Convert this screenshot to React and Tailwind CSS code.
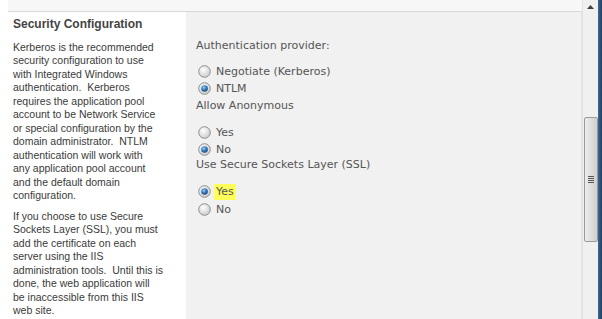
import React from 'react';

function Radio({ checked }) {
  return (
    <svg width="13" height="13" viewBox="0 0 13 13" className="shrink-0">
      <defs>
        <radialGradient id={checked ? 'rc' : 'ru'} cx="0.4" cy="0.35" r="0.7">
          <stop offset="0" stopColor="#ffffff" />
          <stop offset="1" stopColor="#c9c9c9" />
        </radialGradient>
        <radialGradient id="dot" cx="0.4" cy="0.35" r="0.7">
          <stop offset="0" stopColor="#8fd0f5" />
          <stop offset="0.6" stopColor="#2a6fb0" />
          <stop offset="1" stopColor="#15416e" />
        </radialGradient>
      </defs>
      <circle cx="6.5" cy="6.5" r="5.8" fill={`url(#${checked ? 'rc' : 'ru'})`} stroke="#8e8f8f" strokeWidth="1" />
      {checked && <circle cx="6.5" cy="6.5" r="3.3" fill="url(#dot)" />}
    </svg>
  );
}

function Option({ label, checked, highlight }) {
  return (
    <div className={`flex items-center pl-[2px] ${highlight ? 'h-[19px]' : 'h-[17px]'}`}>
      <Radio checked={checked} />
      <span className={`ml-[3px] px-[2px] leading-[16px] ${highlight ? 'bg-[#ffff5c]' : ''}`}>{label}</span>
    </div>
  );
}

const para1 = [
  'Kerberos is the recommended',
  'security configuration to use',
  'with Integrated Windows',
  'authentication.\u00a0 Kerberos',
  'requires the application pool',
  'account to be Network Service',
  'or special configuration by the',
  'domain administrator.\u00a0 NTLM',
  'authentication will work with',
  'any application pool account',
  'and the default domain',
  'configuration.',
];

const para2 = [
  'If you choose to use Secure',
  'Sockets Layer (SSL), you must',
  'add the certificate on each',
  'server using the IIS',
  'administration tools.\u00a0 Until this is',
  'done, the web application will',
  'be inaccessible from this IIS',
  'web site.',
];

export default function App() {
  const verdana = { fontFamily: '"DejaVu Sans", Verdana, sans-serif' };
  return (
    <div className="flex w-[602px] h-[319px] overflow-hidden bg-white">
      <div className="flex-1 flex flex-col">
        <div className="h-[12px] bg-[#f7f7f7] flex">
          <div className="w-[8px] bg-white" />
          <div className="flex-1 border-b border-[#d8d8d8]" />
        </div>
        <div className="flex flex-1">
          <div
            className="w-[186px] bg-white pl-[13px] text-[#3a3a3a] text-[10.5px] leading-[13.5px] whitespace-nowrap"
            style={{ fontFamily: '"Liberation Sans", Tahoma, sans-serif' }}
          >
            <div className="font-bold text-[12px] text-[#444] mt-[6px] mb-[9px]">Security Configuration</div>
            <div>
              {para1.map((l) => (
                <div key={l}>{l}</div>
              ))}
            </div>
            <div className="mt-[7px]">
              {para2.map((l) => (
                <div key={l}>{l}</div>
              ))}
            </div>
          </div>
          <div className="flex-1 bg-[#f1f1f1] border-r border-[#e4e4e4] pl-[10px] pt-[27px] text-[11px] text-[#555]" style={verdana}>
            <div className="leading-[14px]">Authentication provider:</div>
            <div className="mt-[10px]">
              <Option label="Negotiate (Kerberos)" />
              <Option label="NTLM" checked />
            </div>
            <div className="leading-[14px] mt-[2px]">Allow Anonymous</div>
            <div className="mt-[11px]">
              <Option label="Yes" />
              <Option label="No" checked />
            </div>
            <div className="leading-[14px]">Use Secure Sockets Layer (SSL)</div>
            <div className="mt-[10px]">
              <Option label="Yes" checked highlight />
              <Option label="No" />
            </div>
          </div>
        </div>
      </div>
      <div className="w-[16px] bg-[#f0f0f0] border-l border-[#e2e2e2] flex flex-col items-center">
        <div className="h-[14px] flex items-center justify-center">
          <svg width="7" height="4" viewBox="0 0 7 4"><path d="M0 4 L3.5 0 L7 4 Z" fill="#404040" /></svg>
        </div>
        <div className="mt-[103px] w-[14px] h-[125px] border border-[#9a9a9a] rounded-[2px] bg-gradient-to-r from-[#ececec] via-[#dedede] to-[#cfcfcf] flex items-center justify-center">
          <div className="flex flex-col gap-[1px]">
            <div className="w-[6px] h-[1px] bg-[#555]" />
            <div className="w-[6px] h-[1px] bg-[#555]" />
            <div className="w-[6px] h-[1px] bg-[#555]" />
            <div className="w-[6px] h-[1px] bg-[#555]" />
          </div>
        </div>
      </div>
      <div className="w-[4px] bg-gradient-to-r from-[#3b6a96] to-[#1d3f60]" />
    </div>
  );
}
